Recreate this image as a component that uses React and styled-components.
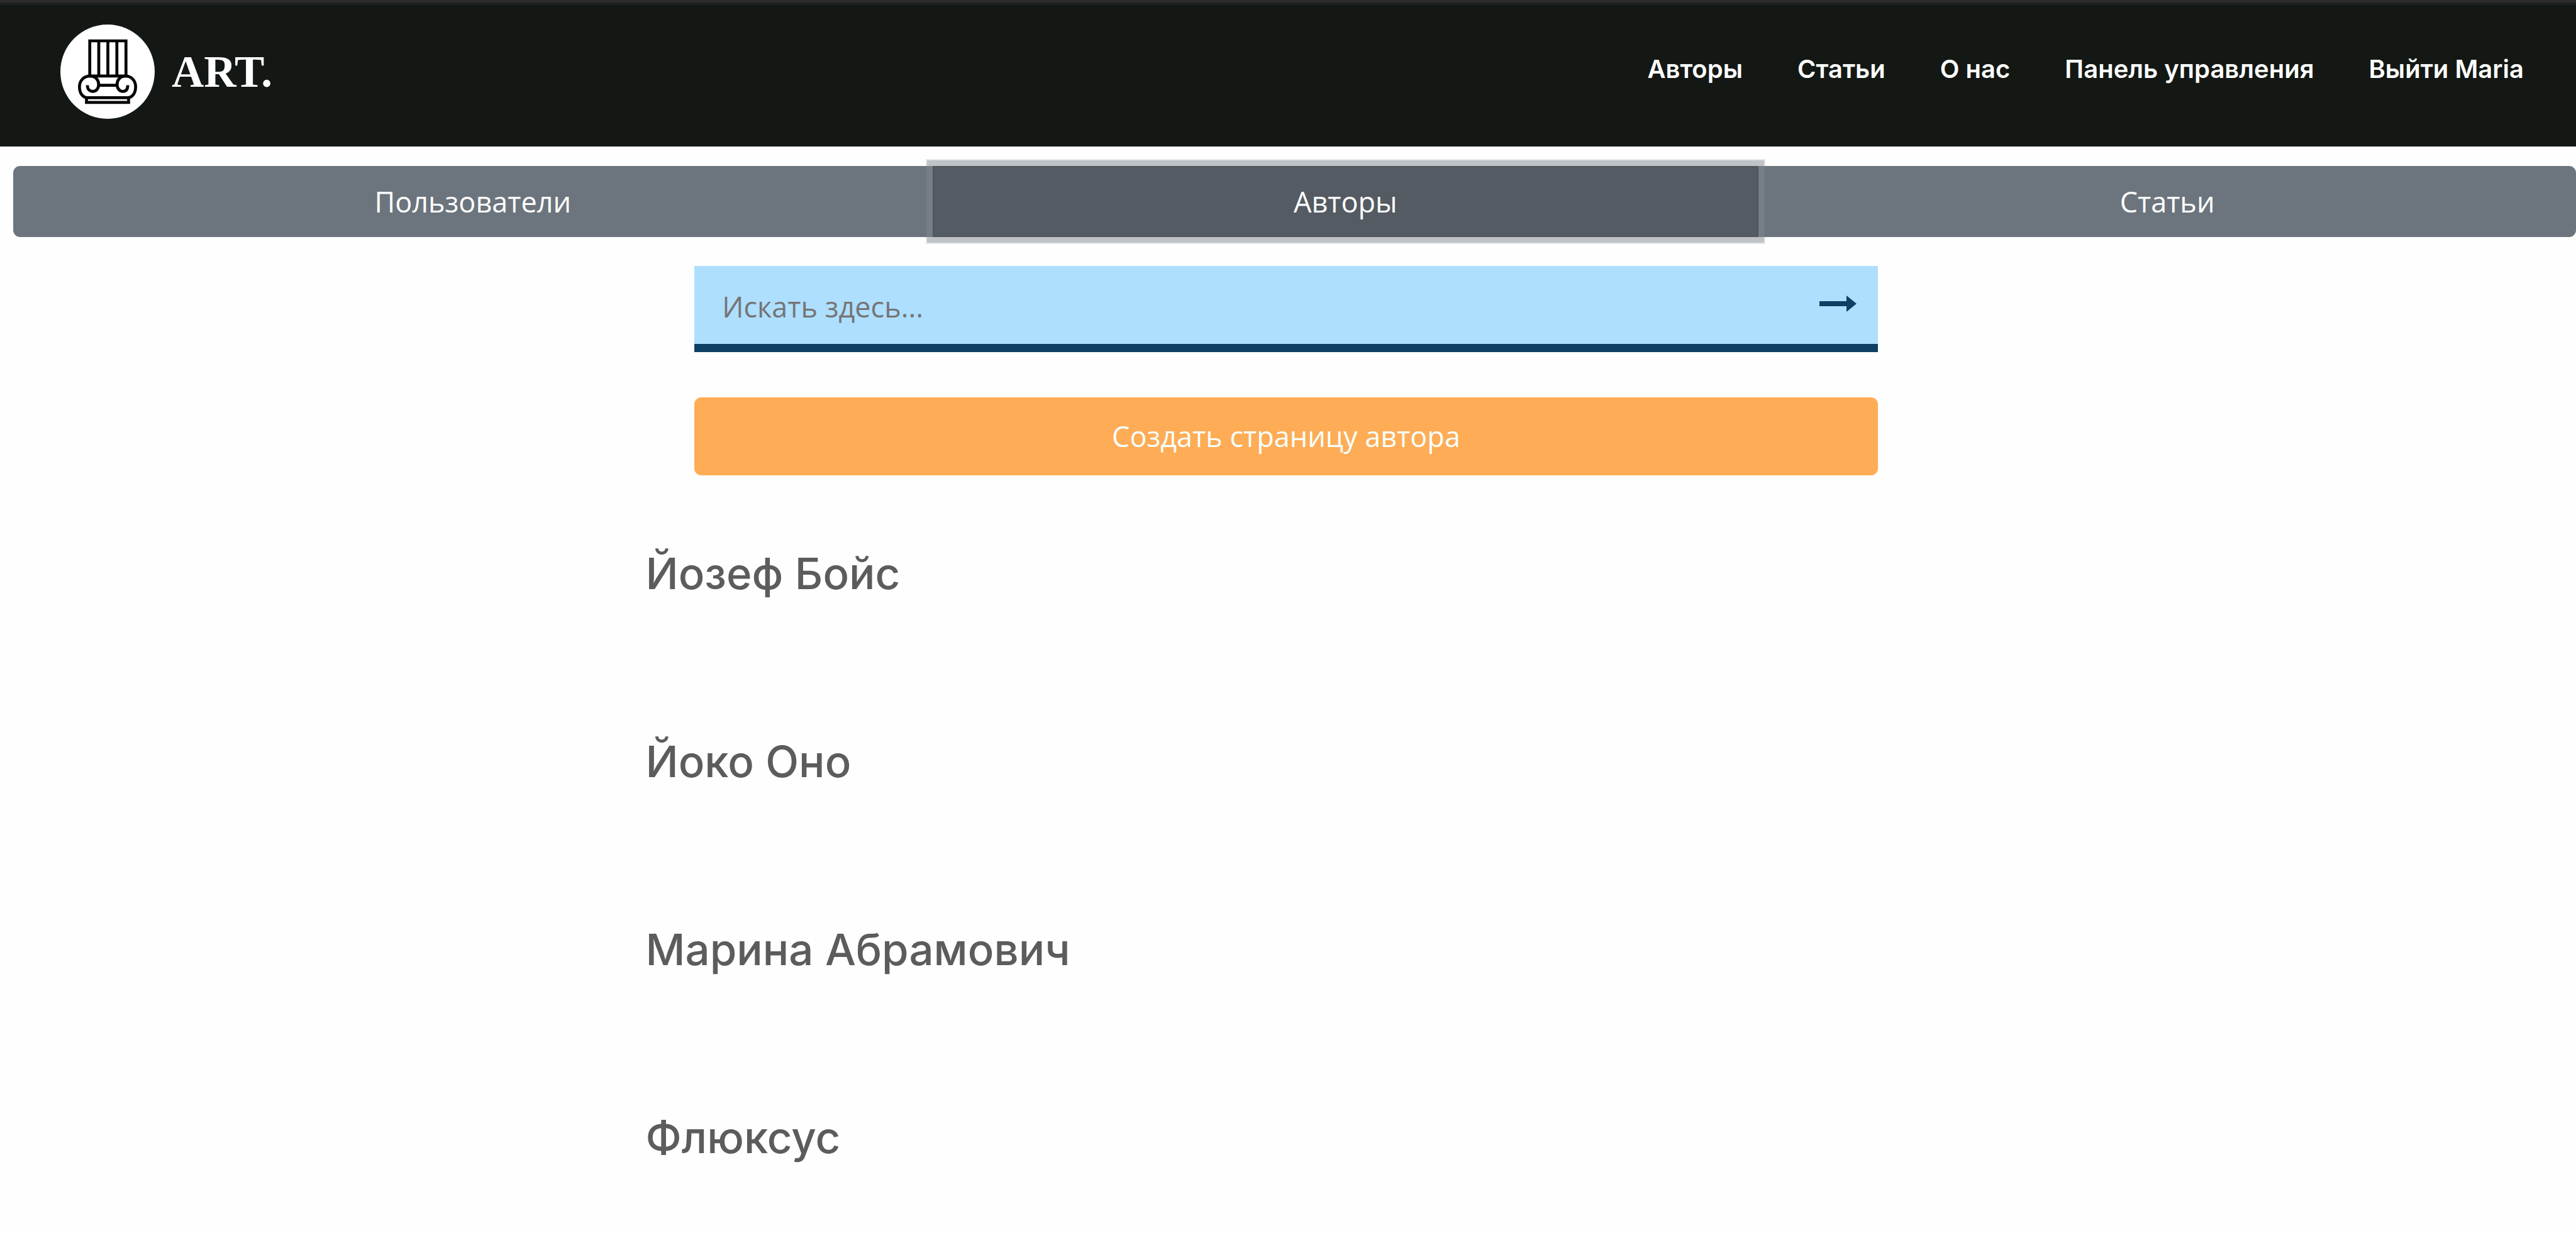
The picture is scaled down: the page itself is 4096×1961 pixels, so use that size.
import React from "react";
import styled, { createGlobalStyle } from "styled-components";

const GlobalStyle = createGlobalStyle`
  *, *::before, *::after { box-sizing: border-box; }
  body {
    margin: 0;
    background: #fefefe;
    font-family: "Open Sans", "Noto Sans", sans-serif;
    font-size: 45px;
    line-height: 68px;
  }
  button, input { font: inherit; }
`;

const Header = styled.header`
  display: flex;
  align-items: center;
  justify-content: space-between;
  padding: 35px 83px 44px 96px;
  background: #141814;
  border-top: 4px solid #2d2d2d;
  box-shadow: inset 0 4px #1f1f1f;
`;

const Brand = styled.a`
  display: flex;
  align-items: center;
  gap: 27px;
  color: #fff;
  font-family: "Liberation Serif", serif;
  font-size: 71px;
  font-weight: 700;
  line-height: 80px;
  text-decoration: none;
`;

const BrandMark = styled.svg`
  display: block;
  width: 150px;
  height: 150px;
`;

const Nav = styled.nav`
  display: flex;
  gap: 87px;
  padding-bottom: 8px;
`;

const NavLink = styled.a`
  color: #fff;
  font-family: Inter, sans-serif;
  font-size: 40px;
  font-weight: 600;
  line-height: 48px;
  text-decoration: none;
`;

const Tabs = styled.div`
  display: flex;
  margin: 31px 0 46px 21px;
`;

const Tab = styled.button`
  flex: 1 1 auto;
  padding: 21px 20px 20px;
  border: 2px solid ${(p) => (p.$active ? "#4e555b" : "#6c757d")};
  background: ${(p) => (p.$active ? "#545b62" : "#6c757d")};
  color: #fff;
  cursor: pointer;
  ${(p) =>
    p.$active &&
    `
    z-index: 1;
    box-shadow: 0 0 0 9px rgba(130, 138, 145, 0.38), 0 0 0 11px rgba(130, 138, 145, 0.2);
  `}
  &:first-child { border-radius: 11px 0 0 11px; }
  &:last-child { border-radius: 0 11px 11px 0; }
`;

const Main = styled.main`
  padding-right: 6px;
`;

const Column = styled.div`
  display: flex;
  flex-direction: column;
  gap: 72px;
  width: 46%;
  margin: 0 auto;
`;

const SearchForm = styled.form`
  display: flex;
  align-items: center;
  background: #aedfff;
  border-bottom: 13px solid #0d4063;
`;

const SearchInput = styled.input`
  flex: 1;
  min-width: 0;
  height: 124px;
  padding: 4px 0 0 44px;
  border: 0;
  background: transparent;
  color: #333;
  outline: 0;
  &::placeholder { color: #757575; opacity: 1; }
`;

const SearchButton = styled.button`
  display: flex;
  padding: 32px 34px 36px;
  border: 0;
  background: transparent;
  cursor: pointer;
`;

const Arrow = styled.svg`
  display: block;
  width: 59px;
  height: 26px;
  fill: #0d4063;
`;

const CreateButton = styled.button`
  padding: 28px;
  border: 0;
  border-radius: 11px;
  background: #ffac56;
  color: #f5fffa;
  cursor: pointer;
`;

const AuthorList = styled.ul`
  display: flex;
  flex-direction: column;
  gap: 215px;
  margin: 114px 0 0 25%;
  padding: 0 0 0 4px;
  list-style: none;
`;

const AuthorName = styled.h2`
  margin: 0;
  font-family: Inter, sans-serif;
  font-size: 69px;
  font-weight: 500;
  line-height: 84px;
`;

const AuthorLink = styled.a`
  color: #5c5c5c;
  text-decoration: none;
`;

const navItems = ["Авторы", "Статьи", "О нас", "Панель управления", "Выйти Maria"];
const tabs = ["Пользователи", "Авторы", "Статьи"];
const authors = ["Йозеф Бойс", "Йоко Оно", "Марина Абрамович", "Флюксус"];

function ColumnLogo() {
  return (
    <BrandMark viewBox="0 0 860 860" aria-hidden="true">
      <circle cx="430" cy="430" r="430" fill="#fff" />
      <g fill="none" stroke="#050505" strokeWidth="27">
        <path d="M268 470V149H598V470M350 149V470M433 149V470M515 149V470M262 470H604" />
        <path d="M275 470C212 470 174 512 174 567C174 620 200 667 250 667H610C660 667 686 620 686 567C686 512 648 470 591 470" />
        <path d="M275 470C325 474 349 508 349 545C349 586 325 610 296 610C266 610 246 588 246 553" />
        <path d="M591 470C541 474 517 508 517 545C517 586 541 610 570 610C600 610 614 588 614 553" />
        <path d="M349 554H517M238 667V710H622V667" />
      </g>
    </BrandMark>
  );
}

export default function App() {
  return (
    <>
      <GlobalStyle />
      <Header>
        <Brand href="#">
          <ColumnLogo />
          ART.
        </Brand>
        <Nav>
          {navItems.map((label) => (
            <NavLink key={label} href="#">{label}</NavLink>
          ))}
        </Nav>
      </Header>
      <Tabs role="group" aria-label="Панель управления">
        {tabs.map((label) => (
          <Tab key={label} type="button" $active={label === "Авторы"} aria-pressed={label === "Авторы"}>
            {label}
          </Tab>
        ))}
      </Tabs>
      <Main>
        <Column>
          <SearchForm role="search" onSubmit={(e) => e.preventDefault()}>
            <SearchInput type="text" placeholder="Искать здесь..." aria-label="Искать здесь..." />
            <SearchButton type="submit" aria-label="Искать">
              <Arrow viewBox="0 0 59 26" aria-hidden="true">
                <path d="M0 9H43V0L59 13L43 26V17H0Z" />
              </Arrow>
            </SearchButton>
          </SearchForm>
          <CreateButton type="button">Создать страницу автора</CreateButton>
        </Column>
        <AuthorList>
          {authors.map((name) => (
            <li key={name}>
              <AuthorName>
                <AuthorLink href="#">{name}</AuthorLink>
              </AuthorName>
            </li>
          ))}
        </AuthorList>
      </Main>
    </>
  );
}
